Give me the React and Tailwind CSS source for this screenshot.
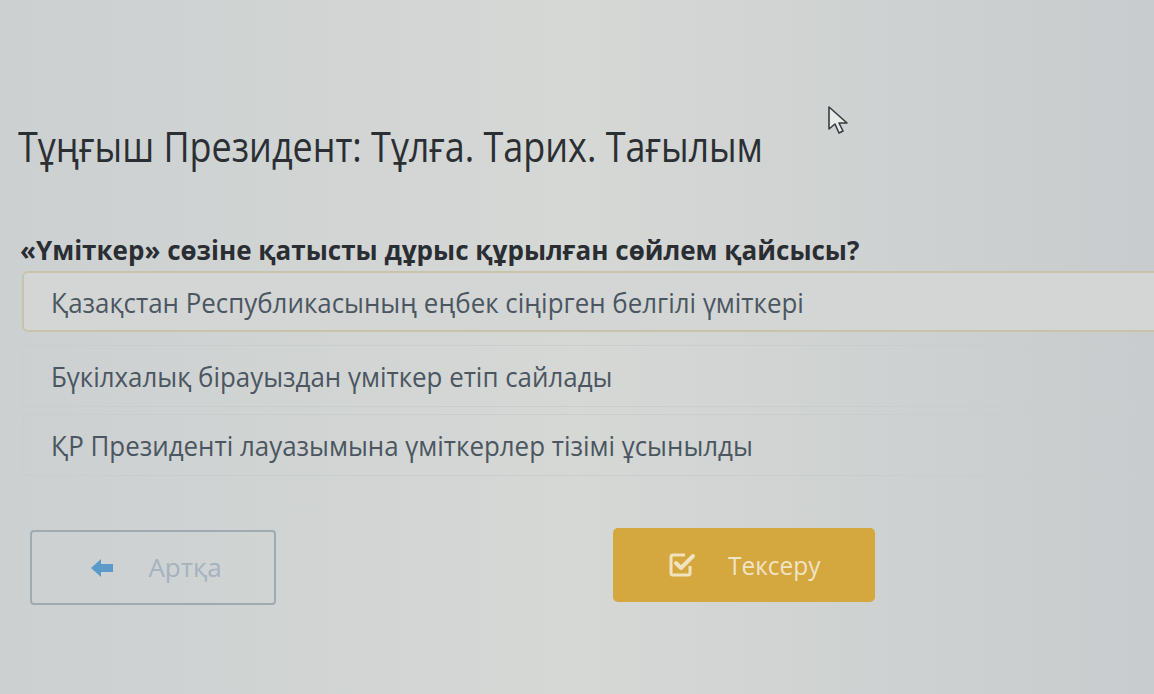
import React from "react";

function CheckIcon() {
  return (
    <svg width="28" height="28" viewBox="0 0 28 28" fill="none">
      <path d="M17 4 H5 a2 2 0 0 0 -2 2 V22 a2 2 0 0 0 2 2 H20 a2 2 0 0 0 2 -2 V15" stroke="#f1e3c0" strokeWidth="3" strokeLinejoin="round" />
      <path d="M8 12l5 5 12-12" stroke="#f1e3c0" strokeWidth="4" strokeLinecap="round" strokeLinejoin="round" />
    </svg>
  );
}

function ArrowIcon() {
  return (
    <svg width="24" height="22" viewBox="0 0 24 22">
      <path d="M1 11 L11 2 L11 7 L23 7 L23 15 L11 15 L11 20 Z" fill="#5a9bc9" strokeLinejoin="round" />
    </svg>
  );
}

export default function App() {
  return (
    <div className="w-[1154px] h-[694px] overflow-hidden bg-gradient-to-r from-[#ccd0d1] via-[#d5d8d5] to-[#c8ccce] font-['Open_Sans',sans-serif] relative">
      <div className="absolute left-[826px] top-[105px]">
        <svg width="26" height="30" viewBox="0 0 26 30">
          <path d="M3 2 L3 24 L9 19 L13 28 L17 26 L13 18 L21 18 Z" fill="#e9ebe8" stroke="#3a3d40" strokeWidth="1.6" strokeLinejoin="round" />
        </svg>
      </div>
      <div className="pt-[117px]">
        <h1 className="ml-[18px] text-[42px] leading-[58px] text-[#2b2f33] font-normal origin-left scale-x-[0.855] whitespace-nowrap">
          Тұңғыш Президент: Тұлға. Тарих. Тағылым
        </h1>
        <div className="mt-[59px] ml-[20px] text-[26px] leading-[32px] font-bold text-[#2a2e33] whitespace-nowrap">
          «Үміткер» сөзіне қатысты дұрыс құрылған сөйлем қайсысы?
        </div>
        <div className="mt-[5px] ml-[22px] flex flex-col w-[1200px]">
          <div className="h-[61px] rounded-[6px] border-2 border-[#c7c4a9] bg-[#d3d6d5] flex items-center pl-[27px]">
            <span className="text-[28px] text-[#4b5661] whitespace-nowrap origin-left scale-x-[0.925] inline-block">
              Қазақстан Республикасының еңбек сіңірген белгілі үміткері
            </span>
          </div>
          <div className="mt-[13px] h-[62px] rounded-[6px] border border-[#c9cdcc] flex items-center pl-[28px]">
            <span className="text-[28px] text-[#4b5661] whitespace-nowrap origin-left scale-x-[0.925] inline-block">
              Бүкілхалық бірауыздан үміткер етіп сайлады
            </span>
          </div>
          <div className="mt-[7px] h-[62px] rounded-[6px] border border-[#c9cdcc] flex items-center pl-[28px]">
            <span className="text-[28px] text-[#4b5661] whitespace-nowrap origin-left scale-x-[0.925] inline-block">
              ҚР Президенті лауазымына үміткерлер тізімі ұсынылды
            </span>
          </div>
        </div>
        <div className="mt-[52px] flex items-start">
          <button className="mt-[2px] ml-[30px] w-[246px] h-[75px] rounded-[4px] border-2 border-[#a0aab1] flex items-center justify-center gap-[34px] pl-[6px]">
            <ArrowIcon />
            <span className="text-[26px] text-[#a5b2c0] inline-block">Артқа</span>
          </button>
          <button className="ml-[337px] w-[262px] h-[74px] rounded-[5px] bg-[#d5a73f] flex items-center justify-center gap-[29px] pl-[4px]">
            <CheckIcon />
            <span className="text-[26px] text-[#f0e4c6] inline-block scale-x-[0.94]">Тексеру</span>
          </button>
        </div>
      </div>
    </div>
  );
}
